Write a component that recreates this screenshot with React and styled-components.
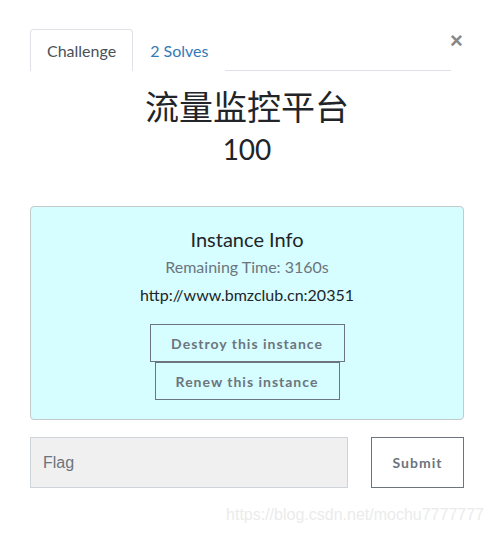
import styled, { createGlobalStyle } from "styled-components";

const GlobalStyle = createGlobalStyle`
  body {
    margin: 0;
    background: #fff;
    font-family: Lato, "Noto Sans CJK SC", sans-serif;
    color: #212529;
  }
`;

const Page = styled.div`
  width: 492px;
  height: 534px;
  box-sizing: border-box;
  padding: 29px 28px 0 30px;
  position: relative;
  overflow: hidden;
`;

const Header = styled.div`
  display: flex;
  align-items: flex-start;
`;

const Tabs = styled.div`
  flex: 1;
  display: flex;
  border-bottom: 1px solid #dee2e6;
  height: 41px;
`;

const Tab = styled.div`
  line-height: 41px;
  padding: 0 16px;
  font-size: 16px;
  box-sizing: border-box;
  color: ${(p) => (p.active ? "#495057" : "#337ab7")};
  background: #fff;
  border: 1px solid ${(p) => (p.active ? "#dee2e6" : "transparent")};
  border-bottom: none;
  border-radius: 4px 4px 0 0;
  height: 42px;
`;

const Close = styled.div`
  width: 14px;
  margin-left: -1px;
  margin-top: 1px;
  font-size: 22px;
  font-weight: 700;
  color: #888;
  line-height: 22px;
  font-family: "Liberation Sans", Arial, sans-serif;
`;

const Title = styled.h3`
  margin: 16px 0 0;
  text-align: center;
  font-size: 34px;
  font-weight: 400;
  line-height: 40px;
  color: #212529;
`;

const Value = styled.h4`
  margin: 2px 0 0;
  text-align: center;
  font-size: 28px;
  font-weight: 400;
  line-height: 40px;
`;

const InfoCard = styled.div`
  margin-top: 37px;
  height: 214px;
  box-sizing: border-box;
  background: #d6fdff;
  border: 1px solid #c4c9cc;
  border-radius: 4px;
  display: flex;
  flex-direction: column;
  align-items: center;
  padding-top: 19px;
`;

const InfoTitle = styled.div`
  font-size: 20px;
  line-height: 26px;
  color: #212529;
`;

const Remaining = styled.div`
  margin-top: 4px;
  font-size: 16px;
  line-height: 22px;
  color: #6c757d;
`;

const Url = styled.div`
  margin-top: 6px;
  font-size: 16px;
  line-height: 22px;
  color: #212529;
`;

const OutlineButton = styled.button`
  width: ${(p) => p.w}px;
  height: ${(p) => p.h}px;
  box-sizing: border-box;
  background: transparent;
  border: 1px solid #6c757d;
  border-radius: 0;
  color: #6c757d;
  font-family: Lato, sans-serif;
  font-weight: 700;
  font-size: 14px;
  letter-spacing: 1px;
  padding: 0;
  cursor: pointer;
`;

const ButtonStack = styled.div`
  margin-top: 18px;
  display: flex;
  flex-direction: column;
  align-items: center;
`;

const FlagRow = styled.div`
  margin-top: 17px;
  display: flex;
  justify-content: space-between;
`;

const FlagInput = styled.input`
  width: 318px;
  height: 51px;
  box-sizing: border-box;
  background: #f0f0f0;
  border: 1px solid #ced4da;
  padding: 0 12px;
  font-size: 16px;
  font-family: "Liberation Sans", Arial, sans-serif;
  &::placeholder {
    color: #6c757d;
  }
`;

const Watermark = styled.div`
  position: absolute;
  right: 8px;
  bottom: 10px;
  font-family: "Liberation Sans", Arial, sans-serif;
  font-size: 16px;
  color: #ebebeb;
`;

export default function App() {
  return (
    <Page>
      <GlobalStyle />
      <Header>
        <Tabs>
          <Tab active>Challenge</Tab>
          <Tab>2 Solves</Tab>
        </Tabs>
        <Close>×</Close>
      </Header>
      <Title>流量监控平台</Title>
      <Value>100</Value>
      <InfoCard>
        <InfoTitle>Instance Info</InfoTitle>
        <Remaining>Remaining Time: 3160s</Remaining>
        <Url>http://www.bmzclub.cn:20351</Url>
        <ButtonStack>
          <OutlineButton w={195} h={38}>Destroy this instance</OutlineButton>
          <OutlineButton w={185} h={38}>Renew this instance</OutlineButton>
        </ButtonStack>
      </InfoCard>
      <FlagRow>
        <FlagInput placeholder="Flag" />
        <OutlineButton w={93} h={51}>Submit</OutlineButton>
      </FlagRow>
      <Watermark>https://blog.csdn.net/mochu7777777</Watermark>
    </Page>
  );
}
